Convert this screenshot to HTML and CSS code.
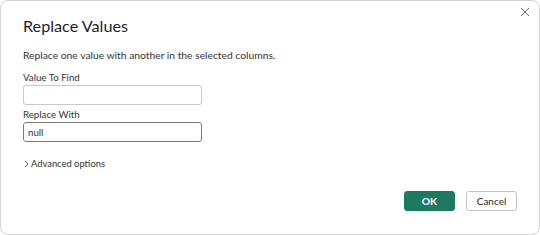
FILE: index.html
```html
<!DOCTYPE html>
<html>
<head>
<meta charset="utf-8">
<link rel="stylesheet" href="styles.css">
</head>
<body>
<div class="dialog">
  <button class="close" aria-label="Close">
    <svg width="10" height="10" viewBox="0 0 10 10"><path d="M1 1L9 9M9 1L1 9" stroke="#6b6b6b" stroke-width="1" fill="none"/></svg>
  </button>
  <h1 class="title">Replace Values</h1>
  <p class="desc">Replace one value with another in the selected columns.</p>
  <div class="field">
    <label class="label">Value To Find</label>
    <div class="input"></div>
  </div>
  <div class="field">
    <label class="label">Replace With</label>
    <div class="input focused">null</div>
  </div>
  <div class="advanced">
    <svg class="chev" width="5" height="8" viewBox="0 0 5 8"><path d="M1 1L4 4L1 7" stroke="#555" stroke-width="0.9" fill="none"/></svg>
    <span>Advanced options</span>
  </div>
  <div class="actions">
    <button class="btn primary">OK</button>
    <button class="btn">Cancel</button>
  </div>
</div>
</body>
</html>
```
FILE: styles.css
```css
html, body {
  margin: 0;
  padding: 0;
  background: #ffffff;
}
body {
  font-family: "Lato", "Open Sans", sans-serif;
  color: #252525;
}
.dialog {
  position: relative;
  box-sizing: border-box;
  width: 540px;
  height: 235px;
  border: 1px solid #d4d4d4;
  border-radius: 8px;
  padding: 14px 22px 0 22px;
  background: #fff;
}
.close {
  position: absolute;
  top: 5px;
  right: 8px;
  width: 12px;
  height: 12px;
  padding: 0;
  border: 0;
  background: none;
  display: flex;
  align-items: center;
  justify-content: center;
}
.title {
  margin: 0;
  font-size: 16.2px;
  font-weight: 400;
  line-height: 22px;
  color: #1f1f1f;
}
.desc {
  margin: 11px 0 0 0;
  font-size: 10.3px;
  line-height: 14px;
  color: #333;
}
.field {
  margin-top: 9px;
  display: flex;
  flex-direction: column;
}
.field + .field {
  margin-top: 3px;
}
.label {
  font-size: 9.7px;
  line-height: 13px;
  color: #333;
}
.input {
  box-sizing: border-box;
  width: 179px;
  height: 20px;
  margin-top: 1px;
  border: 1px solid #c9c9c9;
  border-radius: 3px;
  font-size: 9.7px;
  line-height: 18px;
  padding-left: 4px;
  color: #333;
}
.input.focused {
  border-color: #7a7a7a;
}
.advanced {
  margin-top: 15px;
  display: flex;
  align-items: center;
  gap: 2px;
  font-size: 9.4px;
  line-height: 14px;
  color: #333;
  padding-left: 1px;
}
.actions {
  display: flex;
  justify-content: flex-end;
  gap: 11px;
  margin-top: 20px;
}
.btn {
  box-sizing: border-box;
  width: 51px;
  height: 20px;
  border: 1px solid #c4c4c4;
  border-radius: 3px;
  background: #fff;
  font-family: "Lato", "Open Sans", sans-serif;
  font-size: 10px;
  color: #252525;
  padding: 0;
}
.btn.primary {
  background: #1d7a60;
  border-color: #1d7a60;
  color: #fff;
  font-weight: 700;
  font-size: 10.3px;
}
```
